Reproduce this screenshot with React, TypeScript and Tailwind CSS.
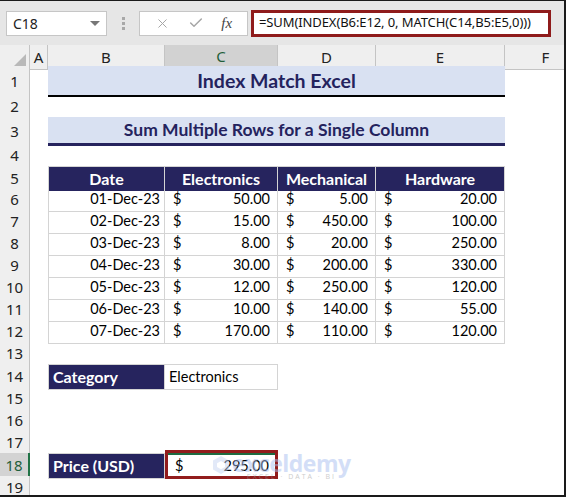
import React from 'react';
import { X, Check } from 'lucide-react';

const GRID = 'grid grid-cols-[30px_18px_117px_113px_98px_129px_82px]';

const ROW_H = [
  'h-[29px]', 'h-[22px]', 'h-[27px]', 'h-[22px]', 'h-[22px]',
  'h-[22px]', 'h-[22px]', 'h-[22px]', 'h-[22px]', 'h-[22px]',
  'h-[22px]', 'h-[22px]', 'h-[22px]', 'h-[23px]', 'h-[22px]',
  'h-[22px]', 'h-[22px]', 'h-[23px]', 'h-[22px]',
];

const data: [string, number, number, number][] = [
  ['01-Dec-23', 50, 5, 20],
  ['02-Dec-23', 15, 450, 100],
  ['03-Dec-23', 8, 20, 250],
  ['04-Dec-23', 30, 200, 330],
  ['05-Dec-23', 12, 250, 120],
  ['06-Dec-23', 10, 140, 55],
  ['07-Dec-23', 170, 110, 120],
];

const RowHead = ({ n, active }: { n: number; active?: boolean }) => (
  <div
    className={
      active
        ? 'flex items-center justify-center bg-[#d3d3d3] border-b border-[#c4c4c4] border-r-2 border-r-[#217346] text-[15px] text-[#1f5f3b] font-["Noto_Sans",sans-serif]'
        : 'flex items-center justify-center bg-[#efefef] border-b border-r border-[#c4c4c4] text-[15px] text-[#222] font-["Noto_Sans",sans-serif]'
    }
  >
    {n}
  </div>
);

const Money = ({ v }: { v: number }) => (
  <div className="flex items-center justify-between pl-[8px] pr-[7px] border-r border-b border-[#d4d4d4]">
    <span>$</span>
    <span>{v.toFixed(2)}</span>
  </div>
);

const ColHead = ({ label, active }: { label: string; active?: boolean }) => (
  <div
    className={
      active
        ? 'flex items-center justify-center bg-[#d2d2d2] border-r border-[#c4c4c4] border-b-2 border-b-[#217346] text-[15px] text-[#1f5f3b]'
        : 'flex items-center justify-center bg-[#efefef] border-r border-b border-[#c4c4c4] text-[15px] text-[#222]'
    }
  >
    {label}
  </div>
);

export default function App() {
  return (
    <div className="relative w-[566px] h-[497px] overflow-hidden bg-white border-t border-r-2 border-b-2 border-[#1a1a1a] font-[Lato,sans-serif] text-black">
      {/* formula bar */}
      <div className="h-[44px] bg-[#e6e6e6] flex items-center pl-[6px] font-['Noto_Sans',sans-serif]">
        <div className="w-[101px] h-[25px] bg-white border border-[#c6c6c6] flex items-center justify-between pl-[6px] pr-[6px] text-[14px] text-[#222]">
          <span>C18</span>
          <span className="w-0 h-0 border-l-[5px] border-r-[5px] border-t-[5px] border-l-transparent border-r-transparent border-t-[#777]" />
        </div>
        <div className="w-[32px] flex flex-col items-center gap-[2px]">
          <span className="w-[3px] h-[3px] bg-[#a8a8a8]" />
          <span className="w-[3px] h-[3px] bg-[#a8a8a8]" />
          <span className="w-[3px] h-[3px] bg-[#a8a8a8]" />
        </div>
        <div className="w-[109px] h-[25px] bg-white border border-[#c6c6c6] flex items-center justify-around px-[6px]">
          <X size={15} strokeWidth={1.6} className="text-[#a6a6a6]" />
          <Check size={16} strokeWidth={2.2} className="text-[#a6a6a6]" />
          <span className="font-['Liberation_Serif',serif] italic text-[15px] text-[#444]">fx</span>
        </div>
        <div className="ml-[3px] w-[300px] h-[27px] bg-white border-[3px] border-[#8f1b1b] flex items-center pl-[5px] text-[13px] text-[#111] whitespace-nowrap tracking-[-0.1px]">
          =SUM(INDEX(B6:E12, 0, MATCH(C14,B5:E5,0)))
        </div>
      </div>

      {/* column headers */}
      <div className={GRID + ' h-[21px] font-["Noto_Sans",sans-serif]'}>
        <div className="bg-[#efefef] border-r border-b border-[#c4c4c4] flex items-end justify-end pr-[3px] pb-[3px]">
          <svg width="12" height="12" viewBox="0 0 12 12">
            <path d="M12 0 L12 12 L0 12 Z" fill="#b9b9b9" />
          </svg>
        </div>
        <ColHead label="A" />
        <ColHead label="B" />
        <ColHead label="C" active />
        <ColHead label="D" />
        <ColHead label="E" />
        <ColHead label="F" />
      </div>

      {/* row 1 */}
      <div className={GRID + ' ' + ROW_H[0]}>
        <RowHead n={1} />
        <div />
        <div className="col-span-4 bg-[#d9e1f2] border-b-2 border-black flex items-center justify-center text-[19.5px] font-bold text-[#24235e]">
          Index Match Excel
        </div>
        <div />
      </div>
      {/* row 2 */}
      <div className={GRID + ' ' + ROW_H[1]}>
        <RowHead n={2} />
      </div>
      {/* row 3 */}
      <div className={GRID + ' ' + ROW_H[2]}>
        <RowHead n={3} />
        <div />
        <div className="col-span-4 bg-[#d9e1f2] border-b-[3px] border-[#26245e] flex items-center justify-center text-[17.5px] font-bold text-[#24235e]">
          Sum Multiple Rows for a Single Column
        </div>
        <div />
      </div>
      {/* row 4 */}
      <div className={GRID + ' ' + ROW_H[3]}>
        <RowHead n={4} />
      </div>
      {/* row 5: table header */}
      <div className={GRID + ' ' + ROW_H[4]}>
        <RowHead n={5} />
        <div />
        {['Date', 'Electronics', 'Mechanical', 'Hardware'].map((h, i) => (
          <div
            key={h}
            className={
              'bg-[#26245e] text-white font-bold text-[16px] flex items-center justify-center border-t border-r border-[#d4d4d4] ' +
              (i === 0 ? 'border-l' : '')
            }
          >
            {h}
          </div>
        ))}
      </div>
      {/* data rows */}
      {data.map((r, i) => (
        <div key={r[0]} className={GRID + ' text-[14.5px] ' + ROW_H[5 + i]}>
          <RowHead n={6 + i} />
          <div />
          <div className="flex items-center justify-end pr-[4px] border-l border-r border-b border-[#d4d4d4]">{r[0]}</div>
          <Money v={r[1]} />
          <Money v={r[2]} />
          <Money v={r[3]} />
        </div>
      ))}
      {/* row 13 */}
      <div className={GRID + ' ' + ROW_H[12]}>
        <RowHead n={13} />
      </div>
      {/* row 14 */}
      <div className={GRID + ' ' + ROW_H[13]}>
        <RowHead n={14} />
        <div />
        <div className="bg-[#26245e] text-white font-bold text-[16px] flex items-center pl-[4px] border border-[#d4d4d4]">
          Category
        </div>
        <div className="flex items-center pl-[4px] text-[14.5px] border-t border-r border-b border-[#d4d4d4]">
          Electronics
        </div>
      </div>
      {[15, 16, 17].map((n) => (
        <div key={n} className={GRID + ' ' + ROW_H[n - 1]}>
          <RowHead n={n} />
        </div>
      ))}
      {/* row 18 */}
      <div className={GRID + ' ' + ROW_H[17]}>
        <RowHead n={18} active />
        <div />
        <div className="bg-[#26245e] text-white font-bold text-[16px] flex items-center pl-[4px] border border-[#d4d4d4]">
          Price (USD)
        </div>
        <div className="relative flex items-center justify-between pl-[8px] pr-[7px] text-[14.5px] border-2 border-[#1e6b41]">
          <span>$</span>
          <span>295.00</span>
          <div className="absolute -left-[2px] -right-[2px] -top-[5px] -bottom-[2px] border-[3px] border-[#921c1c]" />
        </div>
      </div>
      {/* row 19 */}
      <div className={GRID + ' ' + ROW_H[18]}>
        <RowHead n={19} />
      </div>

      {/* watermark */}
      <div className="absolute left-[211px] top-[451px] flex items-start gap-[1px] opacity-50 pointer-events-none">
        <svg width="20" height="20" viewBox="0 0 20 20" className="mt-[3px]">
          <path d="M10 1 L18 5.5 L18 14.5 L10 19 L2 14.5 L2 5.5 Z" fill="#c7d5f3" />
          <path d="M10 6 L14 8.3 L14 12 L10 14.3 L6 12 L6 8.3 Z" fill="#ffffff" />
        </svg>
        <div className="flex flex-col items-center leading-none">
          <span className="text-[23px] font-bold text-[#a9bff0] font-['Open_Sans',sans-serif] tracking-[-0.5px]">exceldemy</span>
          <span className="text-[7px] text-[#9a9a9a] tracking-[2px] -mt-[2px] font-['Open_Sans',sans-serif]">EXCEL · DATA · BI</span>
        </div>
      </div>
    </div>
  );
}
